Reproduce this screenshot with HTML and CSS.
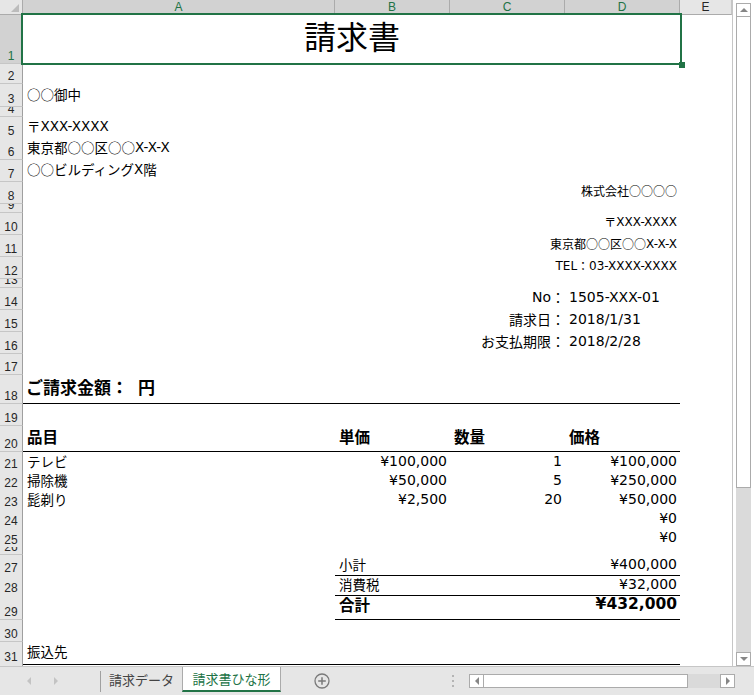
FILE: index.html
```html
<!DOCTYPE html>
<html lang="ja">
<head>
<meta charset="utf-8">
<title>請求書</title>
<link rel="stylesheet" href="styles.css">
</head>
<body>
<div class="app">
  <div class="main">
    <div class="sheet">
      <div class="row colhead">
        <div class="corner"><span class="tri"></span></div>
        <div class="ch sel">A</div>
        <div class="ch sel">B</div>
        <div class="ch sel">C</div>
        <div class="ch sel">D</div>
        <div class="ch">E</div>
      </div>
      <div class="row h50">
        <div class="rh sel">1</div>
        <div class="c span4 title">請求書</div>
      </div>
      <div class="row h20"><div class="rh">2</div></div>
      <div class="row h23 pb4"><div class="rh">3</div><div class="c cA">○○御中</div></div>
      <div class="row h10"><div class="rh">4</div></div>
      <div class="row h21 pb4"><div class="rh">5</div><div class="c cA">〒<span class="lat">XXX-XXXX</span></div></div>
      <div class="row h22 pb4"><div class="rh">6</div><div class="c cA">東京都○○区○○<span class="lat">X-X-X</span></div></div>
      <div class="row h22 pb4"><div class="rh">7</div><div class="c cA">○○ビルディング<span class="lat">X</span>階</div></div>
      <div class="row h22 pb4"><div class="rh">8</div><div class="c cD r sm">株式会社○○○○</div></div>
      <div class="row h9"><div class="rh">9</div></div>
      <div class="row h22 pb4"><div class="rh">10</div><div class="c cD r sm">〒<span class="lat">XXX-XXXX</span></div></div>
      <div class="row h22 pb4"><div class="rh">11</div><div class="c cD r sm">東京都○○区○○<span class="lat">X-X-X</span></div></div>
      <div class="row h22 pb4"><div class="rh">12</div><div class="c cD r sm"><span class="lat">TEL</span>：<span class="lat">03-XXXX-XXXX</span></div></div>
      <div class="row h9"><div class="rh">13</div></div>
      <div class="row h22 pb4"><div class="rh">14</div><div class="c cC r lbl"><span class="lat">No</span>：</div><div class="c cD num">1505-XXX-01</div></div>
      <div class="row h22 pb4"><div class="rh">15</div><div class="c cC r lbl">請求日：</div><div class="c cD num">2018/1/31</div></div>
      <div class="row h22 pb4"><div class="rh">16</div><div class="c cC r lbl">お支払期限：</div><div class="c cD num">2018/2/28</div></div>
      <div class="row h21"><div class="rh">17</div></div>
      <div class="row h29 pb5"><div class="rh">18</div><div class="c span4 bb big">ご請求金額：<span class="gap"></span>円</div></div>
      <div class="row h22"><div class="rh">19</div></div>
      <div class="row h26 pb5">
        <div class="rh">20</div>
        <div class="c bb hd">品目</div>
        <div class="c bb hd">単価</div>
        <div class="c bb hd">数量</div>
        <div class="c bb hd">価格</div>
      </div>
      <div class="row h19">
        <div class="rh">21</div>
        <div class="c">テレビ</div>
        <div class="c r num">¥100,000</div>
        <div class="c r num">1</div>
        <div class="c r num">¥100,000</div>
      </div>
      <div class="row h19">
        <div class="rh">22</div>
        <div class="c">掃除機</div>
        <div class="c r num">¥50,000</div>
        <div class="c r num">5</div>
        <div class="c r num">¥250,000</div>
      </div>
      <div class="row h19">
        <div class="rh">23</div>
        <div class="c">髭剃り</div>
        <div class="c r num">¥2,500</div>
        <div class="c r num">20</div>
        <div class="c r num">¥50,000</div>
      </div>
      <div class="row h19"><div class="rh">24</div><div class="c cD r num">¥0</div></div>
      <div class="row h19"><div class="rh">25</div><div class="c cD r num">¥0</div></div>
      <div class="row h8"><div class="rh">26</div></div>
      <div class="row h20">
        <div class="rh">27</div>
        <div class="c cB span2 bb">小計</div>
        <div class="c r num bb">¥400,000</div>
      </div>
      <div class="row h19">
        <div class="rh">28</div>
        <div class="c cB span2 bb">消費税</div>
        <div class="c r num bb">¥32,000</div>
      </div>
      <div class="row h26 pb5">
        <div class="rh">29</div>
        <div class="c cB span2 bb hd">合計</div>
        <div class="c r num bb total">¥432,000</div>
      </div>
      <div class="row h22"><div class="rh">30</div></div>
      <div class="row h22 pb4"><div class="rh">31</div><div class="c span4 bb">振込先</div></div>
      <div class="row h22"><div class="rh">32</div></div>

      <div class="selection"><span class="handle"></span></div>
    </div>
    <div class="vscroll">
      <div class="sbtn"><span class="up"></span></div>
      <div class="vthumb"></div>
      <div class="vtrack"></div>
      <div class="sbtn"><span class="down"></span></div>
    </div>
  </div>
  <div class="tabbar">
    <div class="nav"><span class="tl"></span><span class="tr"></span></div>
    <div class="sep"></div>
    <div class="tab">請求データ</div>
    <div class="tab active">請求書ひな形</div>
    <div class="add">
      <svg width="16" height="16" viewBox="0 0 16 16"><circle cx="8" cy="8" r="7" fill="none" stroke="#7a7a7a" stroke-width="1.3"/><path d="M8 4.2v7.6M4.2 8h7.6" stroke="#7a7a7a" stroke-width="1.5"/></svg>
    </div>
    <div class="dots">
      <svg width="4" height="14" viewBox="0 0 4 14"><rect x="1" y="1" width="2" height="2" fill="#b4b4b4"/><rect x="1" y="6" width="2" height="2" fill="#b4b4b4"/><rect x="1" y="11" width="2" height="2" fill="#b4b4b4"/></svg>
    </div>
    <div class="hscroll">
      <div class="hbtn"><span class="left"></span></div>
      <div class="hthumb"></div>
      <div class="htrack"></div>
      <div class="hbtn"><span class="right"></span></div>
    </div>
  </div>
</div>
</body>
</html>
```

FILE: styles.css
```css
* { box-sizing: border-box; margin: 0; padding: 0; }
html, body { width: 754px; height: 695px; overflow: hidden; background: #fff; }
body { font-family: "Noto Sans CJK JP", "DejaVu Sans", sans-serif; color: #000; }

.app { display: flex; flex-direction: column; height: 695px; }
.main { display: flex; height: 666px; }
.sheet { position: relative; width: 732px; height: 666px; overflow: hidden; }

.row { display: grid; grid-template-columns: 23px 312px 115px 115px 115px 52px; }
.colhead { height: 14px; }
.h8 { height: 8px; } .h9 { height: 9px; } .h10 { height: 10px; }
.h19 { height: 19px; } .h20 { height: 20px; } .h21 { height: 21px; }
.h22 { height: 22px; } .h23 { height: 23px; } .h26 { height: 26px; }
.h29 { height: 29px; } .h50 { height: 50px; }

.corner { background: #e6e6e6; border-right: 1px solid #ababab; border-bottom: 1px solid #ababab; position: relative; display: flex; align-items: flex-end; justify-content: flex-end; padding: 0 3px 2px 0; }
.corner .tri { width: 0; height: 0; border-left: 8px solid transparent; border-bottom: 8px solid #bcbcbc; }

.ch { background: #e6e6e6; border-right: 1px solid #c6c6c6; border-bottom: 1px solid #ababab; font: 12px/14px "Liberation Sans", sans-serif; color: #262626; text-align: center; }
.ch.sel { background: #d2d2d2; color: #217346; border-right-color: #ababab; }

.rh { grid-column: 1; background: #e6e6e6; border-right: 1px solid #9f9f9f; border-bottom: 1px solid #c6c6c6; font: 12px/12px "Liberation Sans", sans-serif; color: #262626; display: flex; align-items: flex-end; justify-content: center; padding-bottom: 1px; overflow: hidden; }
.rh.sel { background: #d2d2d2; color: #217346; }

.c { display: flex; align-items: flex-end; white-space: nowrap; font-size: 13.5px; line-height: 18px; padding: 0 3px 2px 4px; min-width: 0; }
.pb4 > .c { padding-bottom: 4px; }
.pb5 > .c { padding-bottom: 5px; }
.c.r { justify-content: flex-end; }
.cA { grid-column: 2; }
.cB { grid-column: 3; }
.cC { grid-column: 4; }
.cD { grid-column: 5; }
.span2 { grid-column: 3 / span 2; }
.span4 { grid-column: 2 / span 4; }
.bb { border-bottom: 1px solid #000; }
.lat { font-family: "DejaVu Sans", sans-serif; }

.title { justify-content: center; align-items: center; font-size: 32px; line-height: 40px; padding-bottom: 8px; }
.sm { font-size: 12px; }
.lbl { font-size: 14px; padding-right: 0; }
.num { font-family: "DejaVu Sans", sans-serif; font-size: 14px; }
.big { font-size: 17px; font-weight: 700; line-height: 22px; padding-left: 3px; }
.big .gap { display: inline-block; width: 10px; }
.hd { font-size: 15.5px; font-weight: 700; line-height: 20px; }
.total { font-size: 15.5px; font-weight: 700; line-height: 20px; }

.selection { position: absolute; left: 21px; top: 13px; width: 661px; height: 52px; border: 2px solid #217346; }
.selection .handle { position: absolute; right: -5px; bottom: -5px; width: 6px; height: 6px; background: #217346; }

.vscroll { width: 22px; border-left: 1px solid #c6c6c6; display: flex; flex-direction: column; padding: 3px 3px 0 3px; background: #fff; }
.sbtn { height: 14px; border: 1px solid #ababab; background: #fff; display: flex; align-items: center; justify-content: center; flex-shrink: 0; }
.up { width: 0; height: 0; border-left: 4px solid transparent; border-right: 4px solid transparent; border-bottom: 4px solid #868686; }
.down { width: 0; height: 0; border-left: 4px solid transparent; border-right: 4px solid transparent; border-top: 4px solid #868686; }
.vthumb { height: 471px; border: 1px solid #ababab; border-top: 0; background: #fff; flex-shrink: 0; }
.vtrack { flex: 1; background: #dadada; }

.tabbar { height: 29px; background: #e6e6e6; border-top: 1px solid #c6c6c6; display: flex; align-items: flex-start; }
.nav { width: 100px; height: 28px; display: flex; align-items: center; padding-left: 27px; gap: 23px; }
.tl { width: 0; height: 0; border-top: 4px solid transparent; border-bottom: 4px solid transparent; border-right: 4px solid #c3c3c3; }
.tr { width: 0; height: 0; border-top: 4px solid transparent; border-bottom: 4px solid transparent; border-left: 4px solid #c3c3c3; }
.sep { width: 1px; height: 21px; margin-top: 4px; background: #a0a0a0; }
.tab { width: 81px; height: 25px; display: flex; align-items: center; justify-content: center; font-size: 13px; color: #444; }
.tab.active { width: 99px; background: #fff; color: #217346; border-left: 1px solid #ababab; border-right: 1px solid #ababab; border-bottom: 2px solid #217346; }
.add { margin-left: 33px; height: 28px; display: flex; align-items: center; }
.dots { margin-left: 121px; height: 28px; display: flex; align-items: center; }
.hscroll { margin-left: 14px; margin-top: 7px; display: flex; height: 14px; }
.hbtn { width: 15px; height: 14px; border: 1px solid #ababab; background: #fff; display: flex; align-items: center; justify-content: center; }
.left { width: 0; height: 0; border-top: 4px solid transparent; border-bottom: 4px solid transparent; border-right: 4px solid #868686; }
.right { width: 0; height: 0; border-top: 4px solid transparent; border-bottom: 4px solid transparent; border-left: 4px solid #868686; }
.hthumb { width: 204px; height: 14px; border: 1px solid #ababab; border-left: 0; background: #fff; }
.htrack { width: 32px; height: 14px; background: #dadada; }
```
